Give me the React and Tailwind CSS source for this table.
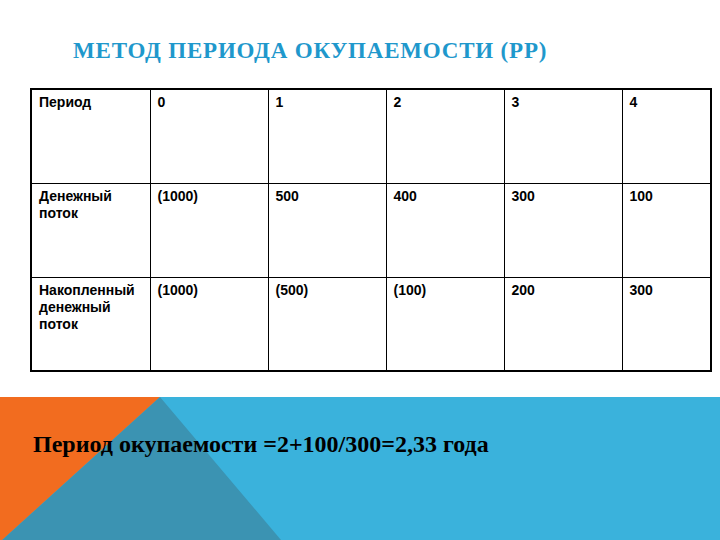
const rows = [
  ['Период', '0', '1', '2', '3', '4'],
  ['Денежный поток', '(1000)', '500', '400', '300', '100'],
  ['Накопленный денежный поток', '(1000)', '(500)', '(100)', '200', '300'],
];

const widths = ['w-[119px]', 'w-[118px]', 'w-[118px]', 'w-[118px]', 'w-[118px]', 'w-[89px]'];

function PaybackTable() {
  return (
    <table className="ml-[30px] mt-[24px] border-collapse border-2 border-black font-[Liberation_Sans,Arial,sans-serif] text-[14px] font-bold leading-[17px] text-black">
      <tbody>
        {rows.map((row, i) => (
          <tr key={i} className="h-[94px]">
            {row.map((cell, j) => (
              <td key={j} className={`${widths[j]} border border-black px-[7px] pt-[4px] align-top`}>
                {cell}
              </td>
            ))}
          </tr>
        ))}
      </tbody>
    </table>
  );
}

function Band() {
  return (
    <div className="relative mt-[25px] h-[143px] w-full overflow-hidden bg-[#3ab2dc]">
      <svg className="absolute inset-0" width="720" height="143" viewBox="0 0 720 143">
        <polygon points="0,0 160,0 0,145" fill="#f26c1f" />
        <polygon points="160,0 281,143 0,143 0,145" fill="#3b93b2" />
      </svg>
      <div className="relative pl-[33px] pt-[33px] font-[Liberation_Serif,Times_New_Roman,serif] text-[24px] font-bold leading-[28px] text-black">
        Период окупаемости =2+100/300=2,33 года
      </div>
    </div>
  );
}

export default function App() {
  return (
    <div className="h-[540px] w-[720px] overflow-hidden bg-white">
      <div className="pl-[73px] pt-[37px] font-serif text-[23px] font-bold leading-[27px] tracking-[0.8px] text-[#1f98cc]">
        <span className="font-[Liberation_Serif,serif]">МЕТОД ПЕРИОДА ОКУПАЕМОСТИ (PP)</span>
      </div>
      <PaybackTable />
      <Band />
    </div>
  );
}
